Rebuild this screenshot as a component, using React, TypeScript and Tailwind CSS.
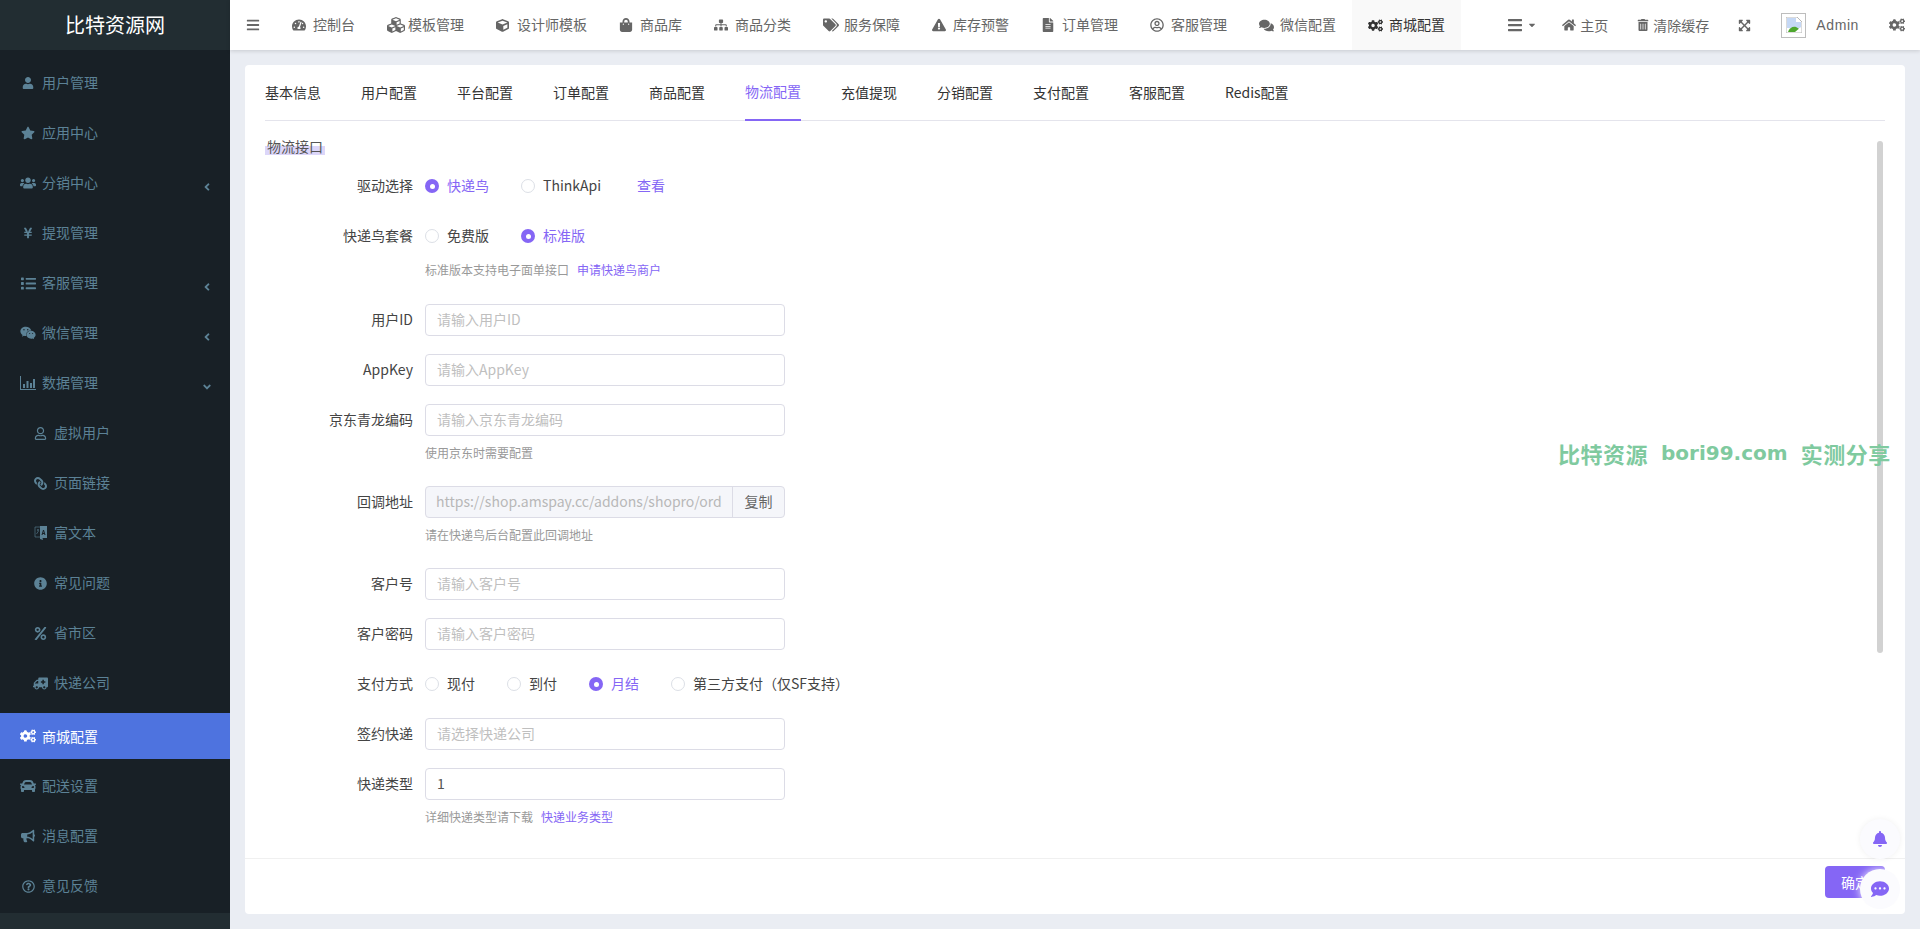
import type { ReactNode } from "react";
import {
  FaAmbulance,
  FaAngleDown,
  FaAngleLeft,
  FaBars,
  FaBell,
  FaBullhorn,
  FaCar,
  FaCaretDown,
  FaCogs,
  FaCommentDots,
  FaComments,
  FaCube,
  FaCubes,
  FaExclamationTriangle,
  FaExpandArrowsAlt,
  FaFileAlt,
  FaHome,
  FaInfoCircle,
  FaLink,
  FaList,
  FaPercent,
  FaRegQuestionCircle,
  FaRegUser,
  FaRegUserCircle,
  FaShoppingBag,
  FaSitemap,
  FaStar,
  FaTachometerAlt,
  FaTags,
  FaTrashAlt,
  FaUser,
  FaUsers,
  FaWeixin,
  FaYenSign,
} from "react-icons/fa";

const ChartIcon = () => (
  <svg viewBox="0 0 16 14" className="w-[16px] h-[14px]" fill="currentColor">
    <path d="M0 0h1v13h15v1H0z" />
    <path d="M3 8h2v4H3zM6.500 5h2v7h-2zM10 7h2v5h-2zM13 3h2v9h-2z" />
  </svg>
);

const LanguageIcon = () => (
  <svg viewBox="0 0 13 16" className="w-[13px] h-[16px]" fill="none" stroke="currentColor">
    <path d="M6 2H1v10h5" opacity="0.6" />
    <path d="M6 1h7v12H8.500L9 15l-3-1z" fill="currentColor" stroke="none" />
    <path d="M3 5h2M4 4v2M2.500 9l2-3" opacity="0.6" />
    <path d="M8 10l1.500-5 1.500 5M8.500 8.500h2" stroke="#182026" />
  </svg>
);

const BrokenImage = () => (
  <div className="w-[25px] h-[25px] border border-[#bdbdbd] flex items-center justify-center">
    <svg viewBox="0 0 16 16" className="w-[16px] h-[16px]">
      <path d="M0 0h11l5 5v11H0z" fill="#fff" stroke="#b8b8b8" strokeWidth="1" />
      <path d="M1 1h9v4h5v6H1z" fill="#c5d8f5" />
      <path d="M2 15c1-4 5-6 8-5l5 3v2z" fill="#4ea72e" />
      <path d="M9 15l6-5v5z" fill="#fff" />
    </svg>
  </div>
);

const sideTop = [
  { icon: <FaUser size={12} />, label: "用户管理" },
  { icon: <FaStar size={14} />, label: "应用中心" },
  { icon: <FaUsers size={16} />, label: "分销中心", arrow: true },
  { icon: <FaYenSign size={12} />, label: "提现管理" },
  { icon: <FaList size={15} />, label: "客服管理", arrow: true },
  { icon: <FaWeixin size={16} />, label: "微信管理", arrow: true },
];

const sideSub = [
  { icon: <FaRegUser size={13} />, label: "虚拟用户" },
  { icon: <FaLink size={13} className="-scale-x-100" />, label: "页面链接" },
  { icon: <LanguageIcon />, label: "富文本" },
  { icon: <FaInfoCircle size={13} />, label: "常见问题" },
  { icon: <FaPercent size={13} />, label: "省市区" },
  { icon: <FaAmbulance size={15} className="-scale-x-100" />, label: "快递公司" },
];

const sideBottom = [
  { icon: <FaCar size={16} />, label: "配送设置" },
  { icon: <FaBullhorn size={14} />, label: "消息配置" },
  { icon: <FaRegQuestionCircle size={13} />, label: "意见反馈" },
];

const topNav = [
  { icon: <FaTachometerAlt size={14} />, label: "控制台" },
  { icon: <FaCubes size={18} />, label: "模板管理" },
  { icon: <FaCube size={13} />, label: "设计师模板" },
  { icon: <FaShoppingBag size={14} />, label: "商品库" },
  { icon: <FaSitemap size={14} />, label: "商品分类" },
  { icon: <FaTags size={16} />, label: "服务保障" },
  { icon: <FaExclamationTriangle size={14} />, label: "库存预警" },
  { icon: <FaFileAlt size={14} />, label: "订单管理" },
  { icon: <FaRegUserCircle size={14} />, label: "客服管理" },
  { icon: <FaComments size={15} />, label: "微信配置" },
  { icon: <FaCogs size={15} />, label: "商城配置", active: true },
];

const tabs = ["基本信息", "用户配置", "平台配置", "订单配置", "商品配置", "物流配置", "充值提现", "分销配置", "支付配置", "客服配置", "Redis配置"];

const SideItem = ({ icon, label, arrow, sub }: { icon: ReactNode; label: string; arrow?: ReactNode; sub?: boolean }) => (
  <div className={`h-[46px] mb-[4px] flex items-center text-[14px] text-[#5c8296] ${sub ? "pl-[30px]" : "pl-[18px]"}`}>
    <span className="w-[20px] flex justify-center shrink-0">{icon}</span>
    <span className="ml-[4px] pb-[2px]">{label}</span>
    {arrow && <span className="ml-auto mr-[17px] mt-[8px]">{arrow}</span>}
  </div>
);

const Sidebar = () => (
  <aside className="w-[230px] shrink-0 h-full flex flex-col bg-[#182026]">
    <div className="h-[50px] bg-[#222d32] text-white text-[20px] flex items-center justify-center shrink-0">比特资源网</div>
    <div className="flex-1 pt-[10px] overflow-hidden">
      {sideTop.map((item) => (
        <SideItem key={item.label} icon={item.icon} label={item.label} arrow={item.arrow ? <FaAngleLeft size={12} /> : undefined} />
      ))}
      <SideItem icon={<ChartIcon />} label="数据管理" arrow={<FaAngleDown size={12} />} />
      <div className="mb-[7px]">
        {sideSub.map((item) => (
          <SideItem key={item.label} icon={item.icon} label={item.label} sub />
        ))}
      </div>
      <div className="h-[46px] mb-[4px] flex items-center pl-[18px] text-[14px] text-white bg-[#4e73df]">
        <span className="w-[20px] flex justify-center shrink-0"><FaCogs size={16} /></span>
        <span className="ml-[4px]">商城配置</span>
      </div>
      {sideBottom.map((item) => (
        <SideItem key={item.label} icon={item.icon} label={item.label} />
      ))}
    </div>
    <div className="h-[16px] bg-[#222d32] shrink-0" />
  </aside>
);

const Header = () => (
  <header className="h-[50px] shrink-0 bg-white flex items-center text-[14px] text-[#666] shadow-[0_1px_4px_rgba(0,0,0,0.15)] relative z-10">
    <div className="w-[46px] flex justify-center shrink-0"><FaBars size={14} /></div>
    {topNav.map((item) => (
      <div key={item.label} className={`h-full flex items-center px-4 ${item.active ? "bg-[#f9f9f9] text-[#333]" : ""}`}>
        <span className="w-[21px] flex shrink-0">{item.icon}</span>
        <span className="pb-[1px]">{item.label}</span>
      </div>
    ))}
    <div className="ml-auto pr-[15px] flex items-center">
      <FaBars size={16} />
      <FaCaretDown size={10} className="ml-[4px]" />
      <FaHome size={14} className="ml-[25px]" />
      <span className="ml-[4px]">主页</span>
      <FaTrashAlt size={12} className="ml-[29px]" />
      <span className="ml-[4px]">清除缓存</span>
      <FaExpandArrowsAlt size={13} className="ml-[29px]" />
      <span className="ml-[30px]"><BrokenImage /></span>
      <span className="ml-[10px] tracking-[0.6px] font-['Liberation_Sans',sans-serif]">Admin</span>
      <FaCogs size={16} className="ml-[30px]" />
    </div>
  </header>
);

const Row = ({ label, children, tight }: { label: string; children: ReactNode; tight?: boolean }) => (
  <div className={`flex items-center h-[32px] text-[14px] ${tight ? "" : "mb-[18px]"}`}>
    <label className="w-[148px] mr-[12px] pb-[2px] text-right text-[#444] shrink-0">{label}</label>
    {children}
  </div>
);

const Help = ({ children, className }: { children: ReactNode; className: string }) => (
  <div className={`ml-[160px] text-[12px] leading-[18px] text-[#999] ${className}`}>{children}</div>
);

const Radio = ({ label, checked }: { label: string; checked?: boolean }) => (
  <div className={`flex items-center mr-[32px] ${checked ? "text-[#8566f5]" : "text-[#444]"}`}>
    <span className={`w-[14px] h-[14px] rounded-full flex items-center justify-center mr-[8px] ${checked ? "bg-[#8566f5]" : "border border-[#dcdfe6] bg-white"}`}>
      {checked && <span className="w-[5px] h-[5px] rounded-full bg-white" />}
    </span>
    <span className="pb-[2px]">{label}</span>
  </div>
);

const TextInput = ({ placeholder, value }: { placeholder?: string; value?: string }) => (
  <input
    readOnly
    placeholder={placeholder}
    value={value ?? ""}
    className="w-[360px] h-[32px] px-[11px] pb-[2px] border border-[#dcdce6] rounded-[4px] bg-white text-[14px] text-[#555] placeholder:text-[#bfbfbf] outline-none"
  />
);

const ConfigForm = () => (
  <div className="flex-1 overflow-hidden px-5">
    <div className="pt-[16px] h-[49px] text-[14px] leading-[18px] text-[#555]">
      <span className="inline-block px-[2px] bg-[linear-gradient(transparent_50%,#dcd6f9_50%)]">物流接口</span>
    </div>
    <Row label="驱动选择">
      <Radio label="快递鸟" checked />
      <Radio label="ThinkApi" />
      <a className="ml-[4px] pb-[2px] text-[#8566f5]">查看</a>
    </Row>
    <Row label="快递鸟套餐" tight>
      <Radio label="免费版" />
      <Radio label="标准版" checked />
    </Row>
    <Help className="mt-[9px] mb-[25px]">
      标准版本支持电子面单接口<a className="ml-[8px] text-[#8566f5]">申请快递鸟商户</a>
    </Help>
    <Row label="用户ID"><TextInput placeholder="请输入用户ID" /></Row>
    <Row label="AppKey"><TextInput placeholder="请输入AppKey" /></Row>
    <Row label="京东青龙编码" tight><TextInput placeholder="请输入京东青龙编码" /></Row>
    <Help className="mt-[8px] mb-[24px]">使用京东时需要配置</Help>
    <Row label="回调地址" tight>
      <div className="w-[360px] h-[32px] flex border border-[#dcdce6] rounded-[4px] bg-[#f5f6fa] overflow-hidden">
        <input
          readOnly
          disabled
          value="https://shop.amspay.cc/addons/shopro/order/express/callback"
          className="flex-1 min-w-0 px-[10px] pb-[2px] bg-transparent text-[14px] text-[#b8b8b8] outline-none"
        />
        <span className="w-[52px] shrink-0 pb-[2px] border-l border-[#dcdce6] flex items-center justify-center text-[#666]">复制</span>
      </div>
    </Row>
    <Help className="mt-[8px] mb-[24px]">请在快递鸟后台配置此回调地址</Help>
    <Row label="客户号"><TextInput placeholder="请输入客户号" /></Row>
    <Row label="客户密码"><TextInput placeholder="请输入客户密码" /></Row>
    <Row label="支付方式">
      <Radio label="现付" />
      <Radio label="到付" />
      <Radio label="月结" checked />
      <Radio label="第三方支付（仅SF支持）" />
    </Row>
    <Row label="签约快递"><TextInput placeholder="请选择快递公司" /></Row>
    <Row label="快递类型" tight><TextInput value="1" /></Row>
    <Help className="mt-[8px]">
      详细快递类型请下载<a className="ml-[8px] text-[#8566f5]">快递业务类型</a>
    </Help>
  </div>
);

export default function App() {
  return (
    <div className="relative h-screen w-full overflow-hidden flex bg-[#eaedf3] font-['Noto_Sans_CJK_SC','Noto_Sans',sans-serif]">
      <Sidebar />
      <main className="flex-1 min-w-0 flex flex-col">
        <Header />
        <section className="relative mx-[15px] mt-[15px] h-[849px] bg-white rounded-[4px] flex flex-col">
          <div className="mx-5 h-[56px] shrink-0 flex gap-[40px] border-b border-[#e4e4ec] text-[14px] text-[#333]">
            {tabs.map((tab) => (
              <div
                key={tab}
                className={`h-[56px] flex items-center pb-[2px] ${tab === "物流配置" ? "text-[#8566f5] border-b-2 border-[#8566f5]" : ""}`}
              >
                {tab}
              </div>
            ))}
          </div>
          <ConfigForm />
          <div className="h-[56px] shrink-0 border-t border-[#f0f0f0] flex justify-end pt-[7px] pr-5">
            <button type="button" className="w-[60px] h-[32px] rounded-[4px] bg-[#8566f5] text-white text-[14px]">确定</button>
          </div>
          <div className="absolute right-[22px] top-[76px] w-[6px] h-[512px] rounded-[3px] bg-[#d2d2d2]" />
        </section>
      </main>
      <div className="absolute left-[1558px] top-[437px] flex items-center gap-[13px] text-[#7fca9f] font-bold text-[22px] tracking-[0.5px] leading-[32px] whitespace-nowrap">
        <span>比特资源</span>
        <span className="font-['DejaVu_Sans',sans-serif] text-[20px] tracking-normal">bori99.com</span>
        <span>实测分享</span>
      </div>
      <div className="absolute left-[1860px] top-[819px] w-[40px] h-[40px] rounded-full bg-[#fbfbfe] shadow-[0_0_6px_rgba(0,0,0,0.06)] flex items-center justify-center text-[#8566f5]">
        <FaBell size={16} />
      </div>
      <div className="absolute left-[1860px] top-[869px] w-[40px] h-[40px] rounded-full bg-[#fbfbfe] shadow-[0_0_8px_rgba(255,255,255,0.9)] flex items-center justify-center text-[#8566f5]">
        <FaCommentDots size={18} />
      </div>
    </div>
  );
}
